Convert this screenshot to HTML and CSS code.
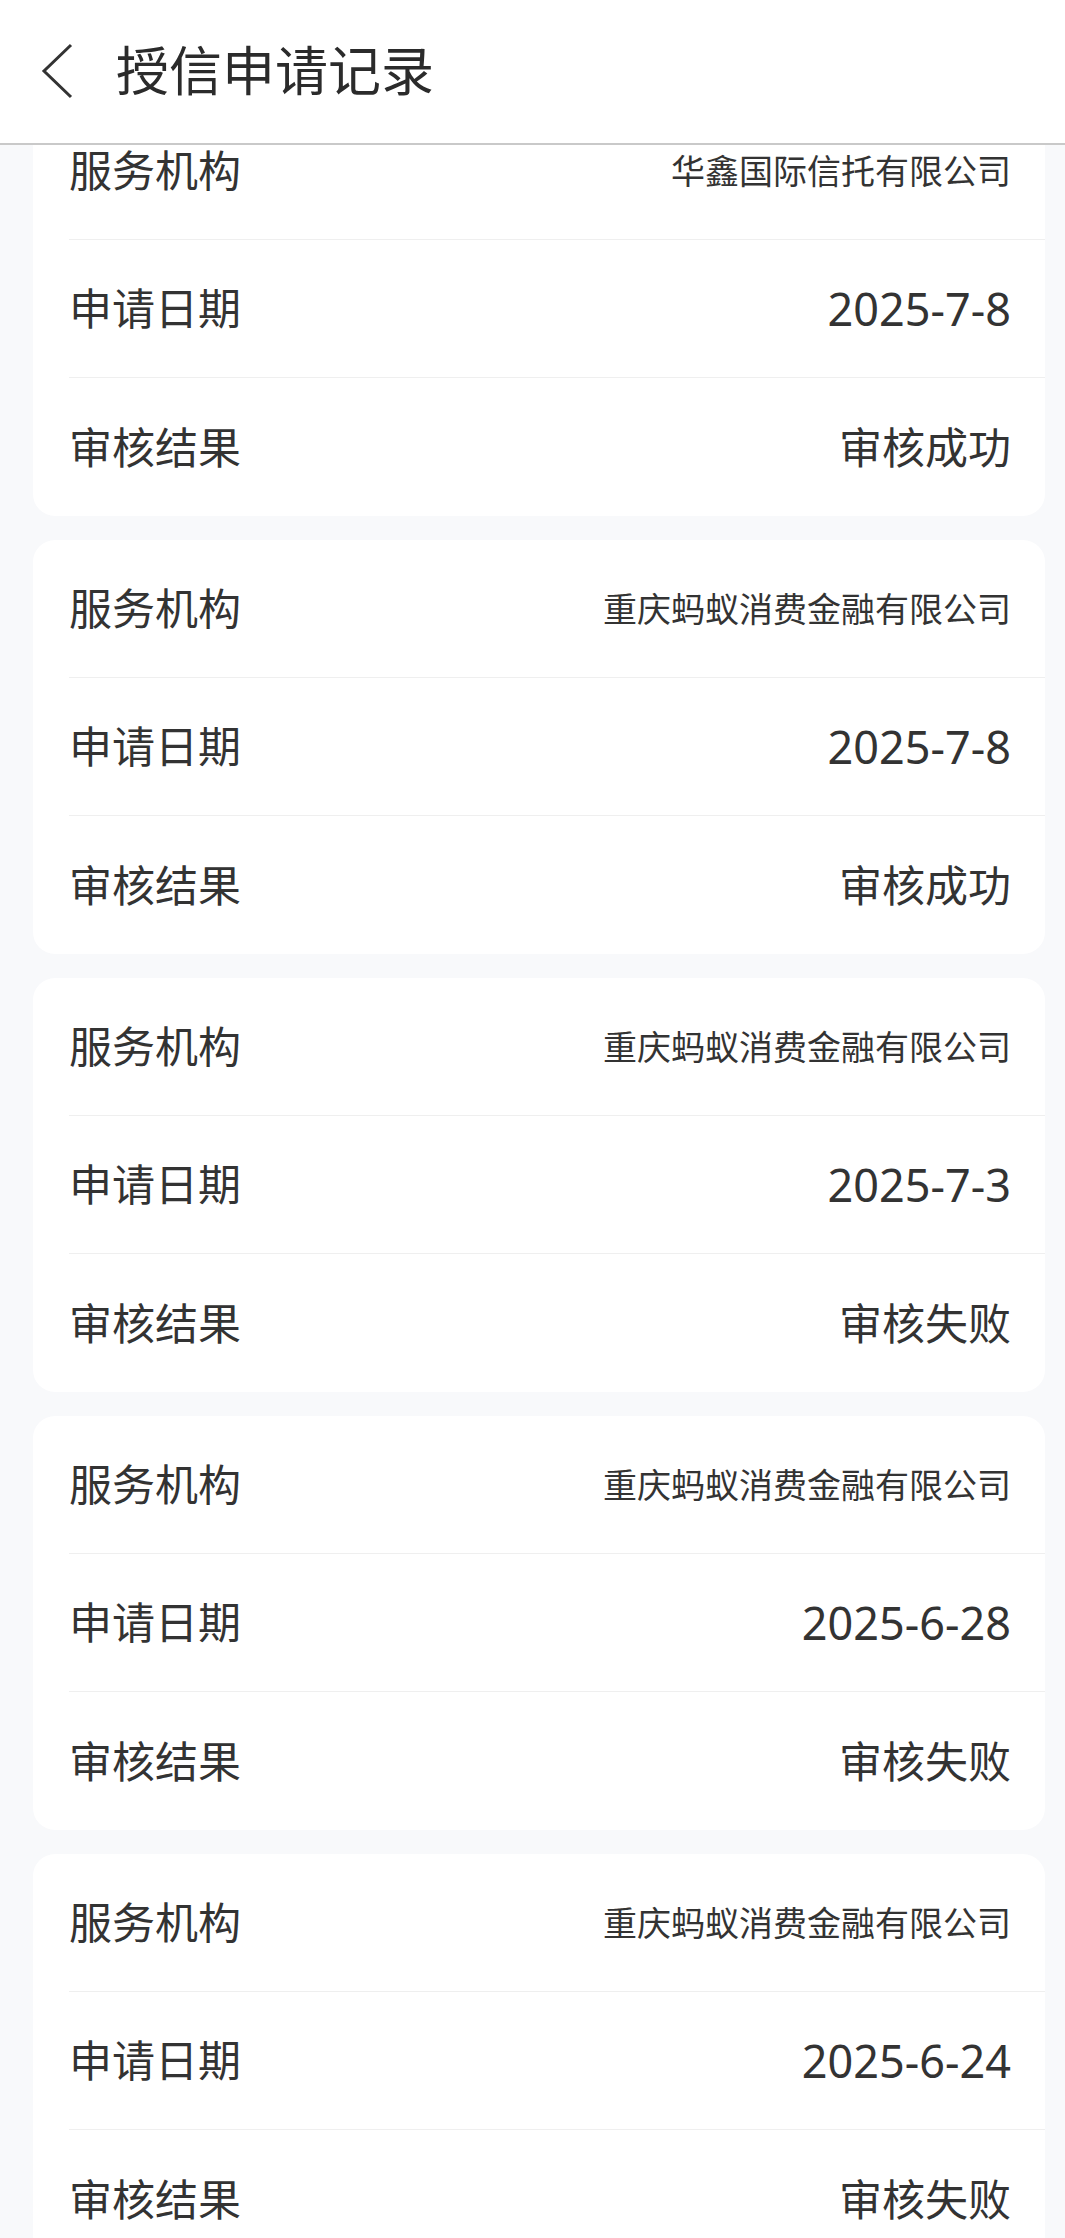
FILE: index.html
```html
<!DOCTYPE html>
<html lang="zh-CN">
  <head>
    <meta charset="UTF-8" />
    <meta name="viewport" content="width=device-width, initial-scale=1.0" />
    <title>授信申请记录</title>
    <link rel="stylesheet" href="styles.css">
  </head>
  <body>
    <header class="topbar">
      <svg class="back" width="34" height="56" viewBox="0 0 34 56">
        <polyline points="31,2 4,28 31,54" fill="none" stroke="#333" stroke-width="3" stroke-linejoin="miter" />
      </svg>
      <h1 class="title">授信申请记录</h1>
    </header>

    <section class="list">
      <div class="card">
        <div class="row">
          <span class="label">服务机构</span>
          <span class="value org">华鑫国际信托有限公司</span>
        </div>
        <div class="row">
          <span class="label">申请日期</span>
          <span class="value date">2025-7-8</span>
        </div>
        <div class="row">
          <span class="label">审核结果</span>
          <span class="value">审核成功</span>
        </div>
      </div>

      <div class="card">
        <div class="row">
          <span class="label">服务机构</span>
          <span class="value org">重庆蚂蚁消费金融有限公司</span>
        </div>
        <div class="row">
          <span class="label">申请日期</span>
          <span class="value date">2025-7-8</span>
        </div>
        <div class="row">
          <span class="label">审核结果</span>
          <span class="value">审核成功</span>
        </div>
      </div>

      <div class="card">
        <div class="row">
          <span class="label">服务机构</span>
          <span class="value org">重庆蚂蚁消费金融有限公司</span>
        </div>
        <div class="row">
          <span class="label">申请日期</span>
          <span class="value date">2025-7-3</span>
        </div>
        <div class="row">
          <span class="label">审核结果</span>
          <span class="value">审核失败</span>
        </div>
      </div>

      <div class="card">
        <div class="row">
          <span class="label">服务机构</span>
          <span class="value org">重庆蚂蚁消费金融有限公司</span>
        </div>
        <div class="row">
          <span class="label">申请日期</span>
          <span class="value date">2025-6-28</span>
        </div>
        <div class="row">
          <span class="label">审核结果</span>
          <span class="value">审核失败</span>
        </div>
      </div>

      <div class="card">
        <div class="row">
          <span class="label">服务机构</span>
          <span class="value org">重庆蚂蚁消费金融有限公司</span>
        </div>
        <div class="row">
          <span class="label">申请日期</span>
          <span class="value date">2025-6-24</span>
        </div>
        <div class="row">
          <span class="label">审核结果</span>
          <span class="value">审核失败</span>
        </div>
      </div>
    </section>
  </body>
</html>
```

FILE: styles.css
```css
* {
  margin: 0;
  padding: 0;
  box-sizing: border-box;
}

body {
  background-color: #f8f9fb;
  color: #333;
  font-family: "Noto Sans", "Noto Sans CJK SC", sans-serif;
}

/* header stays on top, the list is scrolled under it */
.topbar {
  position: fixed;
  top: 0;
  left: 0;
  right: 0;
  z-index: 10;
  height: 145px;
  display: flex;
  align-items: center;
  padding-left: 40px;
  padding-bottom: 2px;
  background-color: #fff;
  border-bottom: 2px solid #c9c9c9;
}
.back {
  display: block;
  margin-top: 1px;
}
.title {
  margin-left: 42px;
  font-size: 53px;
  font-weight: 400;
  line-height: 1;
  color: #2b2b2b;
}

.list {
  display: flex;
  flex-direction: column;
  gap: 24px;
  padding: 102px 20px 40px 33px;
}
.card {
  background-color: #fff;
  border-radius: 22px;
}
.row {
  height: 138px;
  margin-left: 36px;
  padding-right: 34px;
  display: flex;
  justify-content: space-between;
  align-items: center;
  border-bottom: 1px solid #efefef;
}
.row:last-child {
  border-bottom: none;
}
.label {
  font-size: 43px;
  line-height: 1;
}
.value {
  font-size: 43px;
  line-height: 1;
}
.org {
  font-size: 34px;
}
.date {
  font-size: 45px;
}
```
